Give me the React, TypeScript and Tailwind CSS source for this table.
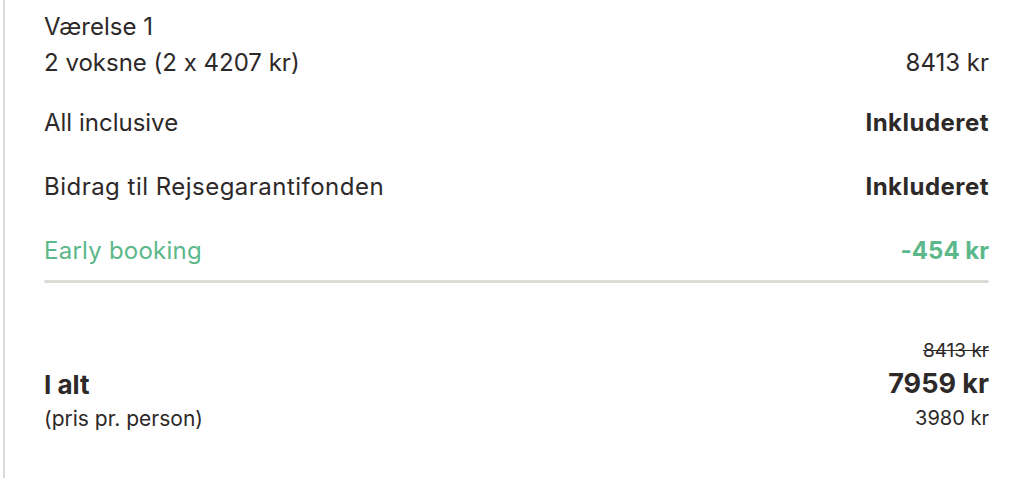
export default function App() {
  return (
    <div className="h-[478px] w-[1024px] bg-white font-['Inter',sans-serif] text-[#2d2928] [font-feature-settings:'calt'_0]">
      <div className="ml-[3px] h-full border-l-2 border-[#dedbd6] pl-[39px] pr-[35px] pt-[9px]">
        <div className="text-[24px] leading-[36px]">
          <div>Værelse 1</div>
          <div className="flex justify-between">
            <span>2 voksne (2 x 4207 kr)</span>
            <span>8413 kr</span>
          </div>
        </div>
        <div className="mt-[24px] flex flex-col gap-[28px] text-[24px] leading-[36px]">
          <div className="flex justify-between">
            <span>All inclusive</span>
            <span className="font-bold tracking-[0.02em]">Inkluderet</span>
          </div>
          <div className="flex justify-between">
            <span className="tracking-[0.02em]">Bidrag til Rejsegarantifonden</span>
            <span className="font-bold tracking-[0.02em]">Inkluderet</span>
          </div>
          <div className="flex justify-between text-[#5cb88a]">
            <span className="tracking-[0.01em]">Early booking</span>
            <span className="font-bold">-454 kr</span>
          </div>
        </div>
        <div className="mt-[11px] h-[3px] rounded-full bg-[#dcdbd6]" />
        <div className="mt-[53px] flex justify-between">
          <div className="flex flex-col pt-[32px]">
            <div className="text-[26px] font-bold leading-[34px]">I alt</div>
            <div className="text-[21px] leading-[34px]">(pris pr. person)</div>
          </div>
          <div className="flex flex-col items-end">
            <div className="text-[19px] leading-[30px] line-through">8413 kr</div>
            <div className="text-[27px] font-bold leading-[36px]">7959 kr</div>
            <div className="text-[20px] leading-[32px]">3980 kr</div>
          </div>
        </div>
      </div>
    </div>
  );
}
